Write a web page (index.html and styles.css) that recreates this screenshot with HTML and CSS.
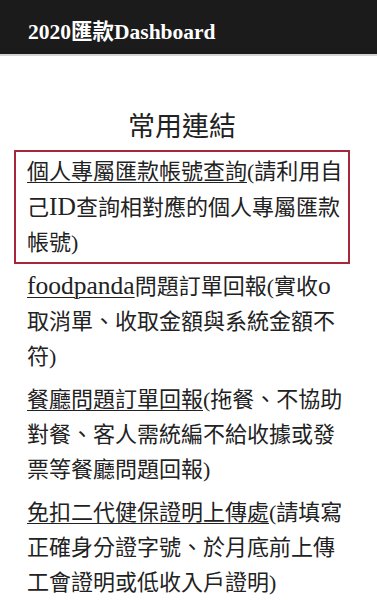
FILE: index.html
```html
<!DOCTYPE html>
<html lang="zh-Hant">
<head>
    <meta charset="UTF-8">
    <meta name="viewport" content="width=device-width, initial-scale=1.0">
    <title>2020匯款Dashboard</title>
    <link rel="stylesheet" href="styles.css">
</head>
<body>
    <header class="topbar">
        <span class="brand">2020匯款Dashboard</span>
    </header>

    <main class="content">
        <h2 class="section-title">常用連結</h2>

        <!-- 常用連結清單 -->
        <ul class="links">
            <li class="link-item selected"><a href="#">個人專屬匯款帳號查詢</a>(請利用自己<span class="latin">ID</span>查詢相對應的個人專屬匯款帳號)</li>
            <li class="link-item"><a href="#" class="latin">foodpanda</a>問題訂單回報(實收<span class="latin">o</span>取消單、收取金額與系統金額不符)</li>
            <li class="link-item"><a href="#">餐廳問題訂單回報</a>(拖餐、不協助對餐、客人需統編不給收據或發票等餐廳問題回報)</li>
            <li class="link-item"><a href="#">免扣二代健保證明上傳處</a>(請填寫正確身分證字號、於月底前上傳工會證明或低收入戶證明)</li>
        </ul>
    </main>
</body>
</html>
```

FILE: styles.css
```css
body {
    margin: 0;
    background-color: #fff;
    color: #222;
    font-family: "Liberation Serif", "Noto Sans CJK TC", serif;
}
.topbar {
    height: 54px;
    background-color: #1b1b1b;
    border-bottom: 2px solid #d4d4d4;
    display: flex;
    align-items: center;
    padding-left: 28px;
}
.brand {
    color: #fff;
    font-weight: bold;
    font-size: 21.5px;
    margin-top: 4px;
}
.content {
    padding: 0 14px;
}
.section-title {
    margin: 51px 0 7px;
    width: 336px;
    text-align: center;
    font-family: "Noto Sans CJK TC", sans-serif;
    font-weight: normal;
    font-size: 27px;
    line-height: 36px;
}
.links {
    list-style: none;
    margin: 0;
    padding: 0;
    width: 336px;
}
.link-item {
    border: 2px solid transparent;
    padding: 2px 2px 2px 11px;
    font-size: 22px;
    line-height: 35px;
}
.link-item a {
    color: #222;
    text-decoration: underline;
    text-decoration-thickness: 1px;
    text-underline-offset: 3px;
}
.latin {
    font-size: 25.5px;
}
.selected {
    border-color: #a6263a;
}
```
